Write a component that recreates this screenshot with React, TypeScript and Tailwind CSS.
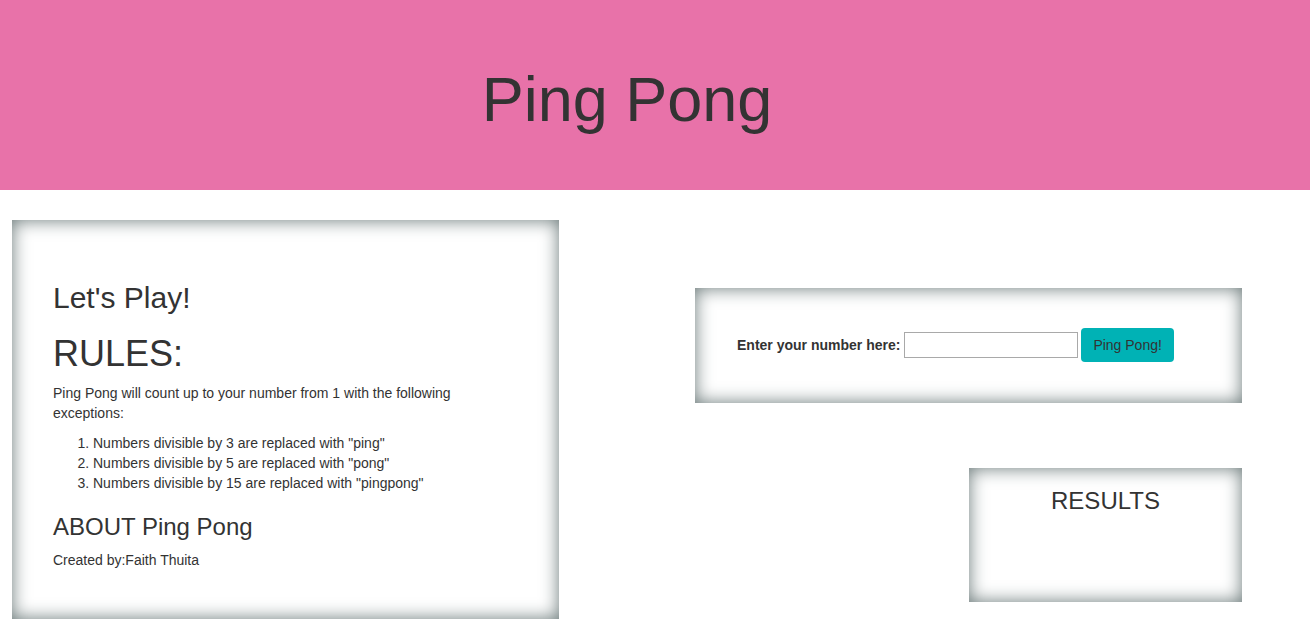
const panel = 'bg-white shadow-[inset_0_0_18px_#667575]'

export default function App() {
  return (
    <div className="min-h-screen bg-white text-[14px] leading-[20px] text-[#333]" style={{ fontFamily: '"Liberation Sans", Arial, sans-serif' }}>
      <header className="h-[190px] bg-[#e872a9] flex items-center justify-center pr-[56px]">
        <h1 className="text-[63px] leading-[70px] font-normal text-[#333] pt-[7px]">Ping Pong</h1>
      </header>

      <main className="flex pt-[30px] pl-[12px]">
        <section className={`${panel} w-[547px] h-[399px] pl-[41px] pr-[42px] pt-[61px]`}>
          <h2 className="text-[30px] leading-[33px]">Let&apos;s Play!</h2>
          <h1 className="text-[36px] leading-[40px] mt-[20px] mb-[9px]">RULES:</h1>
          <p className="mb-[10px]">Ping Pong will count up to your number from 1 with the following exceptions:</p>
          <ol className="list-decimal pl-[40px] mb-[10px]">
            <li>Numbers divisible by 3 are replaced with &quot;ping&quot;</li>
            <li>Numbers divisible by 5 are replaced with &quot;pong&quot;</li>
            <li>Numbers divisible by 15 are replaced with &quot;pingpong&quot;</li>
          </ol>
          <h3 className="text-[24px] leading-[26px] mt-[21px] mb-[10px]">ABOUT Ping Pong</h3>
          <p>Created by:Faith Thuita</p>
        </section>

        <div className="ml-[136px] w-[547px] flex flex-col pt-[68px]">
          <form className={`${panel} h-[115px] flex items-center pl-[42px] pb-[1px]`} onSubmit={e => e.preventDefault()}>
            <label className="font-bold mr-[4px]">Enter your number here:</label>
            <input type="number" className="w-[174px] h-[26px] border border-[#a9a9a9] px-1 outline-none" />
            <button type="submit" className="ml-[3px] h-[34px] px-[12px] rounded-[4px] bg-[#00b2b5] text-[#333] text-[14px]">Ping Pong!</button>
          </form>

          <div className={`${panel} self-end w-[273px] h-[134px] mt-[65px] pt-[20px] text-center`}>
            <h3 className="text-[24px] leading-[26px]">RESULTS</h3>
          </div>
        </div>
      </main>
    </div>
  )
}
